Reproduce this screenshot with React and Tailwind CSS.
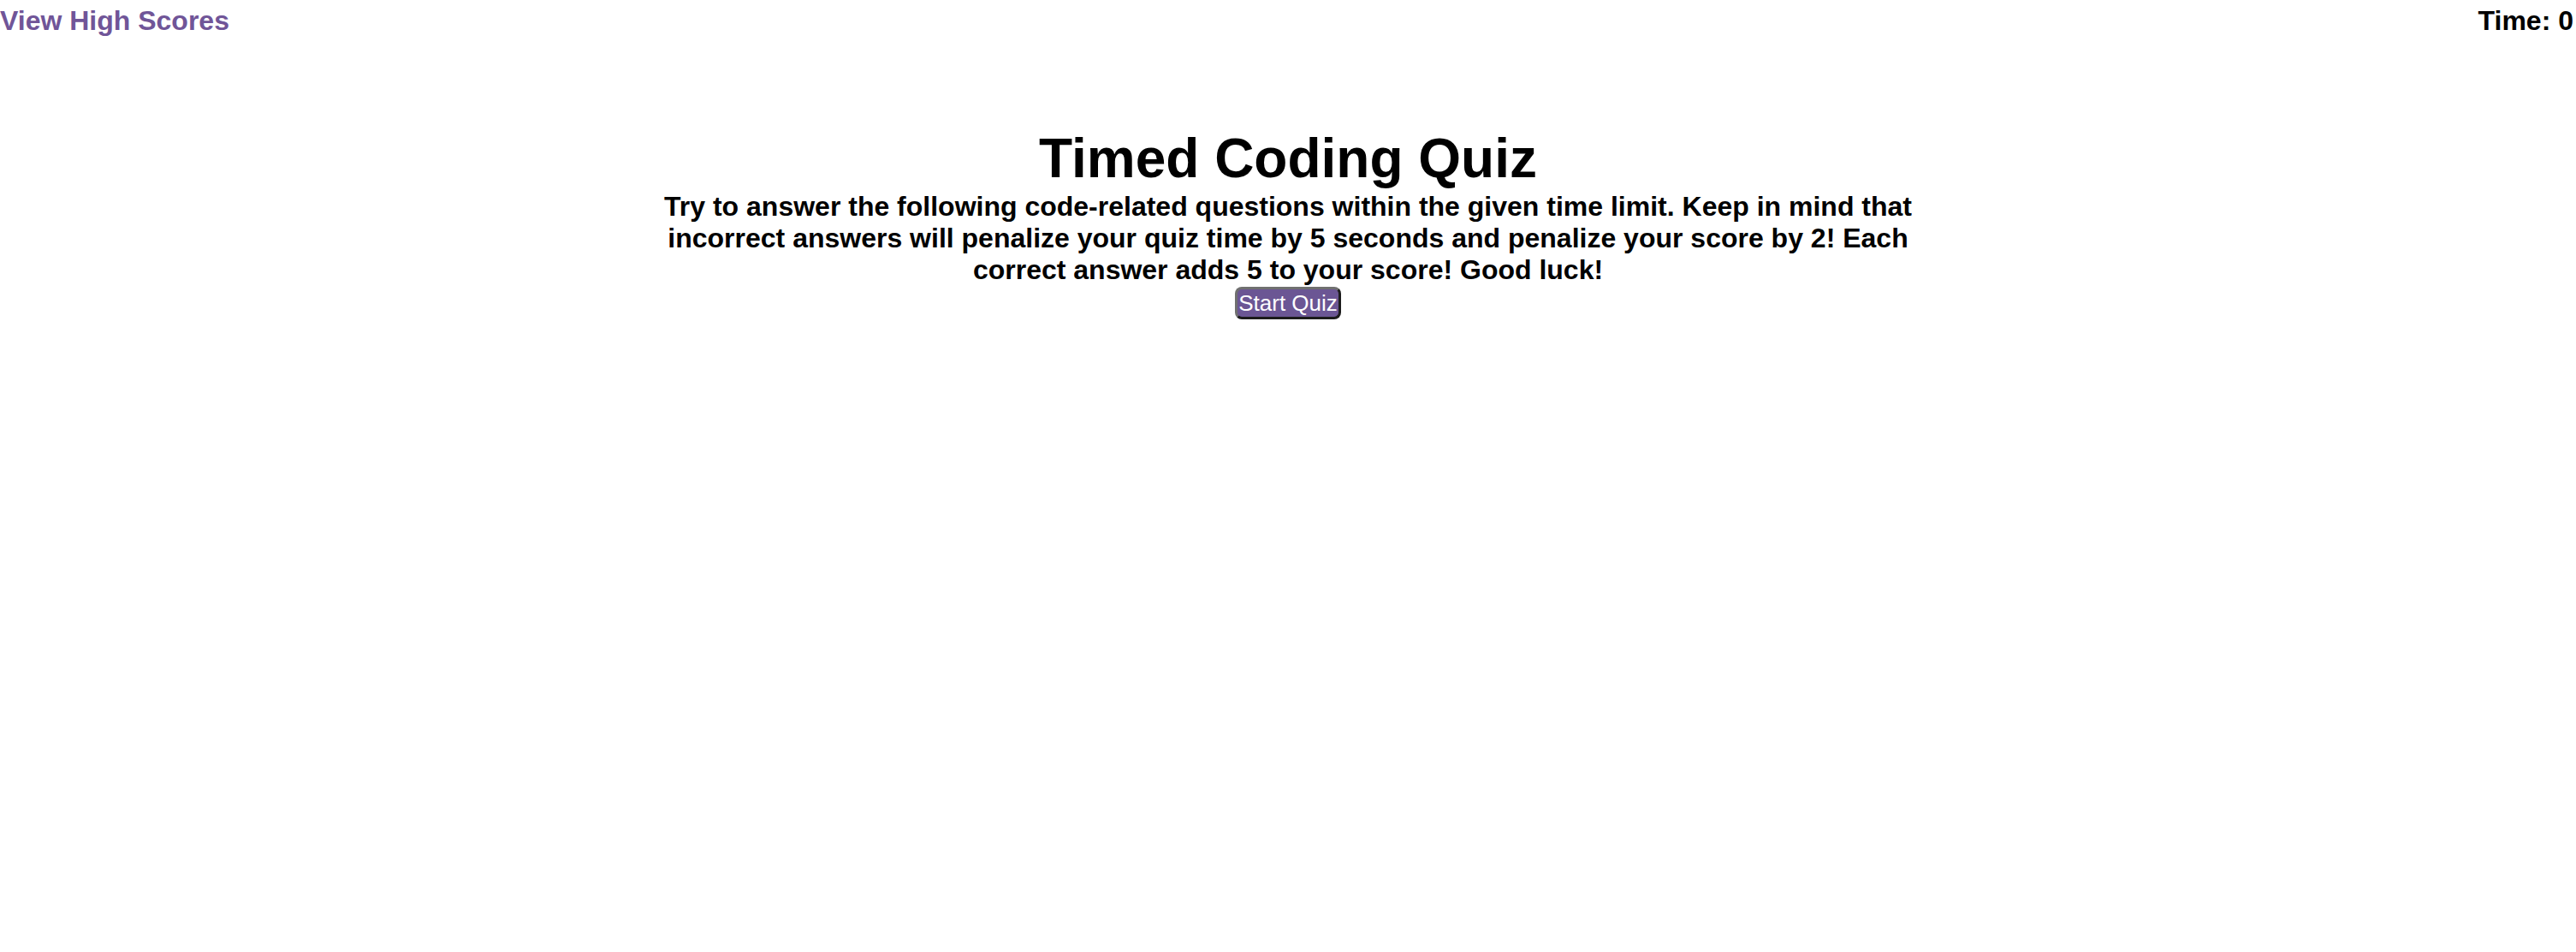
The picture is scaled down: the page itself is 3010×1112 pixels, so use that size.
export default function App() {
  return (
    <div className="min-h-[1112px] bg-white text-black" style={{ fontFamily: '"Liberation Sans", Arial, sans-serif' }}>
      <header className="flex justify-between text-[32px] font-bold leading-[48px]">
        <a href="#" className="text-[#705598] no-underline">View High Scores</a>
        <span className="pr-[3px]">Time: 0</span>
      </header>
      <main className="mt-[100px] flex flex-col items-center text-center">
        <h1 className="text-[64px] font-bold leading-[74px]">Timed Coding Quiz</h1>
        <p className="mt-[1px] w-1/2 text-[32px] font-bold leading-[37px]">
          Try to answer the following code-related questions within the given time limit. Keep in mind that incorrect answers will penalize your quiz time by 5 seconds and penalize your score by 2! Each correct answer adds 5 to your score! Good luck!
        </p>
        <button className="mt-[1px] rounded-[8px] border-[3px] border-t-[#707070] border-l-[#707070] border-r-[#1c1c1c] border-b-[#1c1c1c] bg-[#6b5694] px-[1px] py-[1px] text-[26px] leading-[30px] text-white">
          Start Quiz
        </button>
      </main>
    </div>
  );
}
